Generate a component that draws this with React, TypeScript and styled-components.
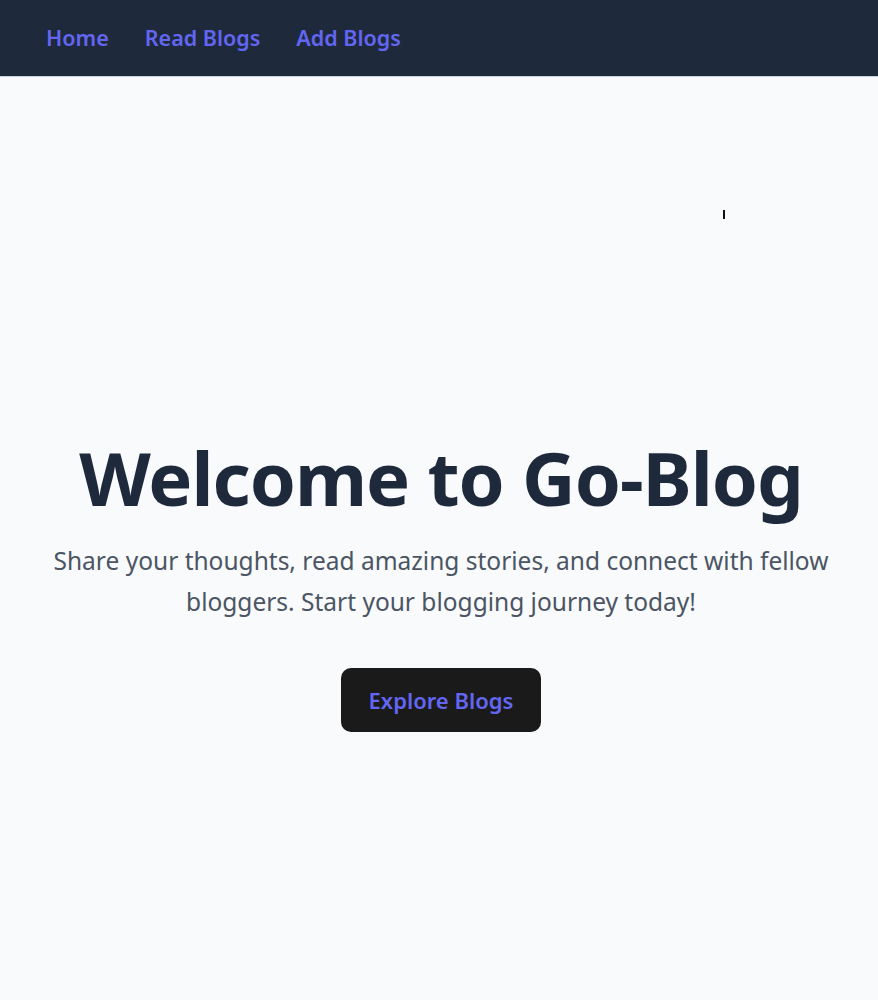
import React from "react";
import styled, { createGlobalStyle } from "styled-components";

const Global = createGlobalStyle`
  html, body { margin: 0; padding: 0; background: #f8fafc; }
  body { font-family: "Noto Sans", "Open Sans", sans-serif; }
  * { box-sizing: border-box; }
`;

const Nav = styled.nav`
  height: 77px;
  background: #1e293b;
  display: flex;
  align-items: center;
  gap: 36px;
  padding: 0 46px 2px;
  border-bottom: 1px solid #cbd5e1;
`;

const NavLink = styled.a`
  color: #6366f1;
  font-size: 21.5px;
  font-weight: 600;
  text-decoration: none;
`;

const Main = styled.main`
  position: relative;
  height: 923px;
  display: flex;
  flex-direction: column;
  align-items: center;
  justify-content: center;
  text-align: center;
  padding: 87px 38px 0 42px;
`;

const Title = styled.h1`
  margin: 0;
  font-size: 74px;
  font-weight: 700;
  color: #1e293b;
  letter-spacing: -1px;
  line-height: 89px;
`;

const Lead = styled.p`
  margin: 18px 0 0;
  max-width: 800px;
  font-size: 24.5px;
  line-height: 41px;
  color: #4b5563;
`;

const Button = styled.button`
  margin-top: 46px;
  width: 200px;
  height: 64px;
  background: #1a1a1a;
  border: none;
  border-radius: 10px;
  color: #6366f1;
  font-family: inherit;
  font-size: 22px;
  font-weight: 600;
  cursor: pointer;
`;

const Caret = styled.span`
  position: absolute;
  left: 723px;
  top: 133px;
  width: 2px;
  height: 9px;
  background: #111;
`;

export default function App() {
  return (
    <>
      <Global />
      <Nav>
        <NavLink href="#">Home</NavLink>
        <NavLink href="#">Read Blogs</NavLink>
        <NavLink href="#">Add Blogs</NavLink>
      </Nav>
      <Main>
        <Caret />
        <Title>Welcome to Go-Blog</Title>
        <Lead>
          Share your thoughts, read amazing stories, and connect with fellow
          bloggers. Start your blogging journey today!
        </Lead>
        <Button>Explore Blogs</Button>
      </Main>
    </>
  );
}
